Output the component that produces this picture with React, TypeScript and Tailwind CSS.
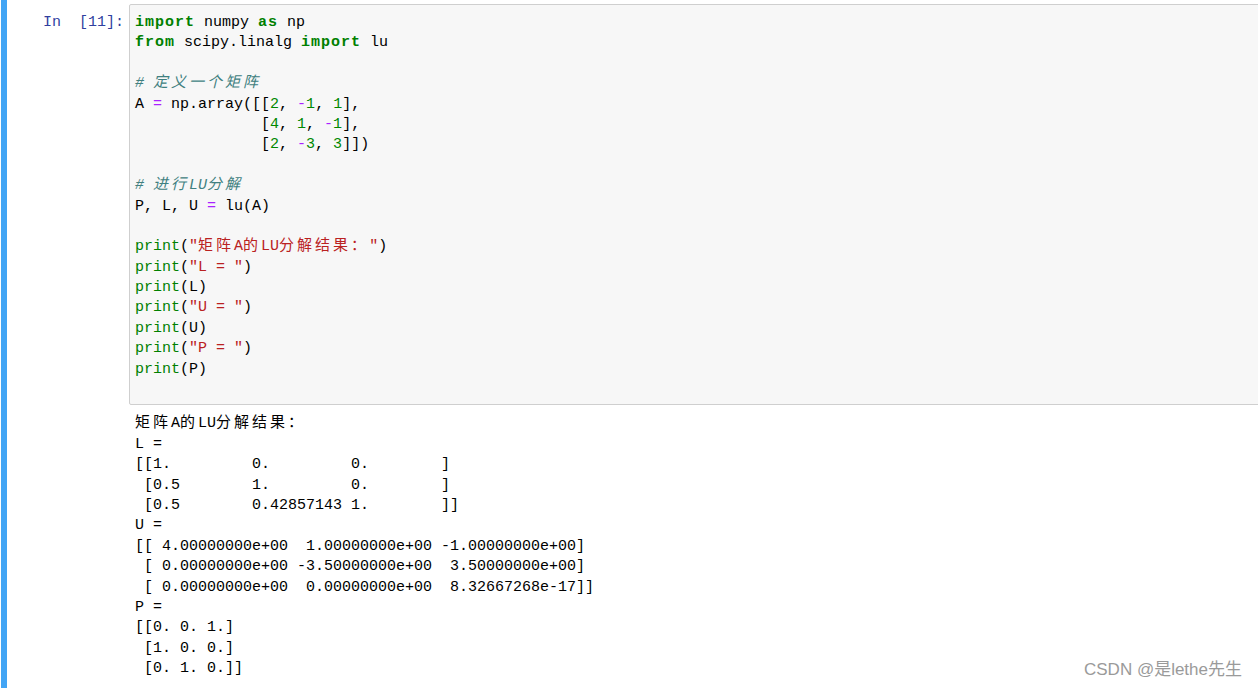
const mono = "font-['Liberation_Mono','Noto_Sans_CJK_SC',monospace]"

// token helpers, jupyter classic colours
const Kw = ({ children }: { children: string }) => <span className="text-[#008000] font-bold tracking-[1px]">{children}</span>
const Num = ({ children }: { children: string }) => <span className="text-[#008800]">{children}</span>
const Op = ({ children }: { children: string }) => <span className="text-[#aa22ff]">{children}</span>
const Str = ({ children }: { children: string }) => <span className="text-[#ba2121]">{children}</span>
const Bi = ({ children }: { children: string }) => <span className="text-[#008000]">{children}</span>
const Cm = ({ children }: { children: string }) => <span className="text-[#408080] italic">{children}</span>
const Zh = ({ children }: { children: string }) => <span className="tracking-[3px]">{children}</span>

const Line = ({ children }: { children?: React.ReactNode }) => (
    <div className="h-[20.4px] leading-[20.4px]">{children}</div>
)

const outputText = [
    "L = ",
    "[[1.         0.         0.        ]",
    " [0.5        1.         0.        ]",
    " [0.5        0.42857143 1.        ]]",
    "U = ",
    "[[ 4.00000000e+00  1.00000000e+00 -1.00000000e+00]",
    " [ 0.00000000e+00 -3.50000000e+00  3.50000000e+00]",
    " [ 0.00000000e+00  0.00000000e+00  8.32667268e-17]]",
    "P = ",
    "[[0. 0. 1.]",
    " [1. 0. 0.]",
    " [0. 1. 0.]]",
]

const App = () => {
    return (
        <div className={`relative w-[1258px] h-[688px] overflow-hidden bg-white flex text-[15px] text-black ${mono}`}>
            {/* selected cell marker */}
            <div className="ml-[1px] w-[6px] bg-[#42a5f5] shrink-0" />

            <div className="flex-1 flex flex-col pt-[4px]">
                {/* input row */}
                <div className="flex">
                    <div className="w-[122px] shrink-0 text-right pr-[5px] pt-[9px] leading-[20.4px] text-[#303f9f] whitespace-pre">
                        In  [11]:
                    </div>
                    <div className="flex-1 -mr-[20px] border border-[#cfcfcf] rounded-[2px] bg-[#f7f7f7] pl-[5px] pt-[8px] pb-[4px] whitespace-pre">
                        <Line><Kw>import</Kw> numpy <Kw>as</Kw> np</Line>
                        <Line><Kw>from</Kw> scipy.linalg <Kw>import</Kw> lu</Line>
                        <Line />
                        <Line><Cm># </Cm><span className="text-[#408080] italic tracking-[3px]">定义一个矩阵</span></Line>
                        <Line>A <Op>=</Op> np.array([[<Num>2</Num>, <Op>-</Op><Num>1</Num>, <Num>1</Num>],</Line>
                        <Line>              [<Num>4</Num>, <Num>1</Num>, <Op>-</Op><Num>1</Num>],</Line>
                        <Line>              [<Num>2</Num>, <Op>-</Op><Num>3</Num>, <Num>3</Num>]])</Line>
                        <Line />
                        <Line><Cm># </Cm><span className="text-[#408080] italic tracking-[3px]">进行</span><Cm>LU</Cm><span className="text-[#408080] italic tracking-[3px]">分解</span></Line>
                        <Line>P, L, U <Op>=</Op> lu(A)</Line>
                        <Line />
                        <Line><Bi>print</Bi>(<Str>"</Str><span className="text-[#ba2121] tracking-[3px]">矩阵</span><Str>A</Str><span className="text-[#ba2121] tracking-[3px]">的</span><Str>LU</Str><span className="text-[#ba2121] tracking-[3px]">分解结果：</span><Str>"</Str>)</Line>
                        <Line><Bi>print</Bi>(<Str>"L = "</Str>)</Line>
                        <Line><Bi>print</Bi>(L)</Line>
                        <Line><Bi>print</Bi>(<Str>"U = "</Str>)</Line>
                        <Line><Bi>print</Bi>(U)</Line>
                        <Line><Bi>print</Bi>(<Str>"P = "</Str>)</Line>
                        <Line><Bi>print</Bi>(P)</Line>
                        <Line />
                    </div>
                </div>

                {/* output row */}
                <div className="flex">
                    <div className="w-[122px] shrink-0" />
                    <div className="flex-1 pl-[6px] pt-[9px] whitespace-pre">
                        <Line><Zh>矩阵</Zh>A<Zh>的</Zh>LU<Zh>分解结果：</Zh></Line>
                        {outputText.map((t, i) => (
                            <Line key={i}>{t}</Line>
                        ))}
                    </div>
                </div>
            </div>

            {/* watermark */}
            <div className="absolute right-[16px] bottom-[7px] font-['Liberation_Sans','Noto_Sans_CJK_SC',sans-serif] text-[17px] leading-[22px] text-[#9a9a9a]">
                CSDN @是lethe先生
            </div>
        </div>
    )
}
export default App
